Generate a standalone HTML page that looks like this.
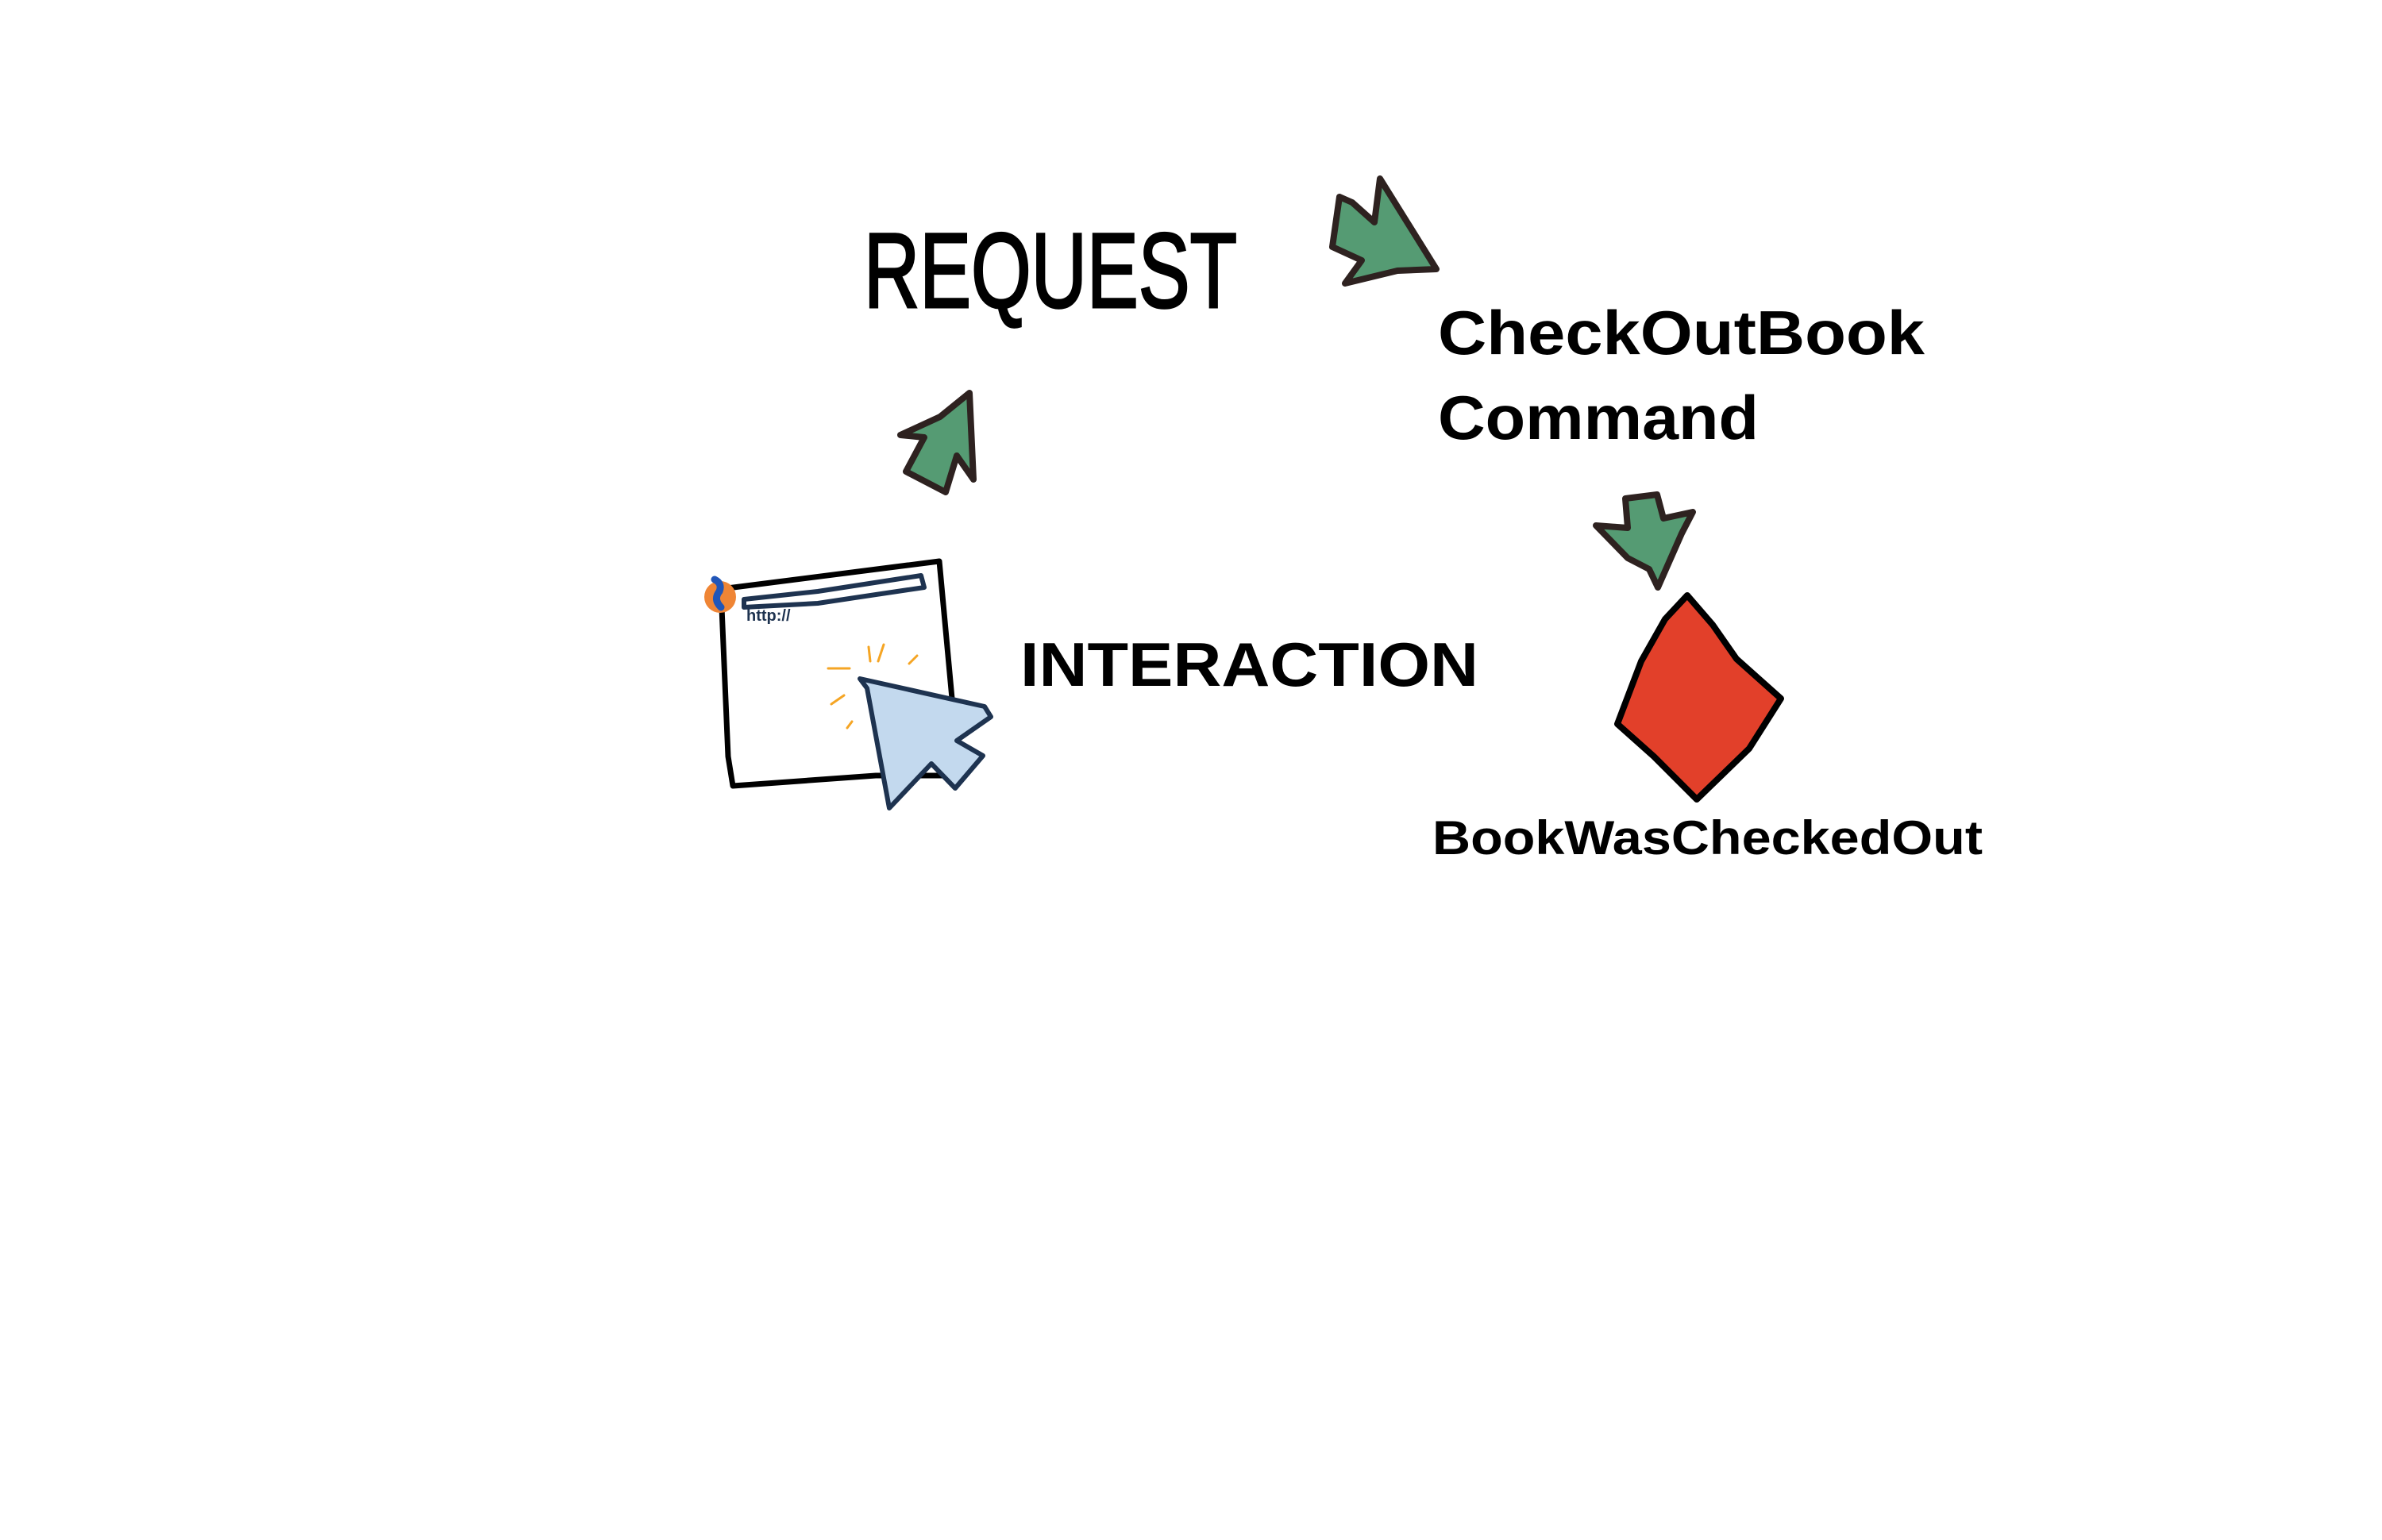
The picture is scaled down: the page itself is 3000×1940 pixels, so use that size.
<!DOCTYPE html>
<html><head><meta charset="utf-8"><style>
html,body{margin:0;padding:0;background:#fff;}
svg{display:block;}
</style></head><body>
<svg width="3000" height="1940" viewBox="0 0 3000 1940" xmlns="http://www.w3.org/2000/svg">
<rect width="3000" height="1940" fill="#fff"/>
<g font-family="'Liberation Sans', sans-serif" fill="#000">
<text x="1088" y="387" font-size="134" textLength="470" lengthAdjust="spacingAndGlyphs" stroke="#000" stroke-width="3">REQUEST</text>
<text x="1811" y="446" font-size="78" font-weight="bold" textLength="613" lengthAdjust="spacingAndGlyphs">CheckOutBook</text>
<text x="1811" y="553" font-size="78" font-weight="bold" textLength="404" lengthAdjust="spacingAndGlyphs">Command</text>
<text x="1285" y="864" font-size="78" font-weight="bold" textLength="577" lengthAdjust="spacingAndGlyphs">INTERACTION</text>
<text x="1804" y="1076" font-size="60" font-weight="bold" textLength="693" lengthAdjust="spacingAndGlyphs">BookWasCheckedOut</text>
</g>
<g fill="#559b73" stroke="#2e2220" stroke-width="8" stroke-linejoin="round">
<path d="M1738,225 L1809,339 L1760,341 L1694,357 L1715,328 L1678,311 L1687,248 L1703,255 L1731,280 Z"/>
<path d="M1221,495 L1226,604 L1205,574 L1191,620 L1141,594 L1164,551 L1134,548 L1184,525 Z"/>
<path d="M2010,662 L2050,665 L2047,628 L2087,623 L2095,653 L2132,645 L2118,672 L2088,740 L2077,717 L2050,703 Z"/>
</g>
<path d="M2125,750 L2157,787 L2187,830 L2243,880 L2203,943 L2137,1007 L2083,953 L2037,912 L2067,833 L2097,780 Z" fill="#e2402a" stroke="#000" stroke-width="8" stroke-linejoin="round"/>
<path d="M908,742 L1183,707 L1208,977 L1103,977 L923,990 L917,953 Z" fill="#fff" stroke="#000" stroke-width="7" stroke-linejoin="round"/>
<path d="M937,765 L937,755 L1030,745 L1160,725 L1164,740 L1083,752 L1030,760 Z" fill="none" stroke="#1e3350" stroke-width="6" stroke-linejoin="round"/>
<text x="940" y="782" font-family="'Liberation Sans', sans-serif" font-size="20" fill="#1e3350" font-weight="bold">http://</text>
<circle cx="907" cy="752" r="20" fill="#ef8535"/>
<path d="M900,730 q10,5 6,15 q-8,10 2,20" stroke="#2156b8" stroke-width="9" fill="none" stroke-linecap="round"/>
<g stroke="#f5a524" stroke-width="3" stroke-linecap="round" fill="none">
<path d="M1043,842 L1070,842"/><path d="M1094,815 L1096,833"/><path d="M1113,812 L1106,833"/>
<path d="M1145,836 L1155,826"/><path d="M1047,887 L1063,876"/><path d="M1067,917 L1073,909"/>
</g>
<path d="M1083,855 L1240,890 L1248,903 L1205,933 L1238,952 L1203,993 L1173,962 L1120,1018 L1092,867 Z" fill="#c3d9ee" stroke="#1e3350" stroke-width="6" stroke-linejoin="round"/>
</svg>
</body></html>
